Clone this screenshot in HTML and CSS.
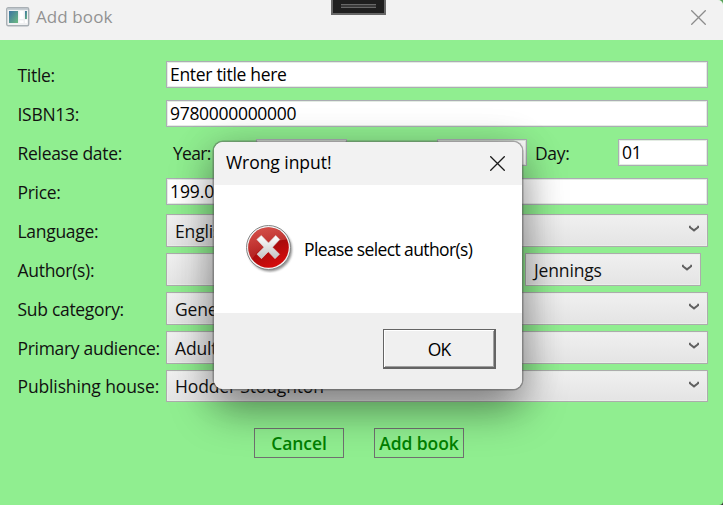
FILE: index.html
```html
<!DOCTYPE html>
<html lang="en">
<head>
<meta charset="utf-8">
<title>Add book</title>
<link rel="stylesheet" href="styles.css">
</head>
<body>
<svg class="defs" width="0" height="0"><symbol id="chev" viewBox="0 0 10 7"><path d="M.8 .8v1.400L5 5.400l4.200-3.200V.8" fill="none" stroke="#606060" stroke-width="2"/></symbol></svg>
<div class="window">
  <header class="titlebar">
    <svg class="appicon" width="24" height="20" viewBox="0 0 24 20">
      <defs><linearGradient id="scr" x1="0" y1="0" x2="1" y2="1"><stop offset="0" stop-color="#3c73a3"/><stop offset="1" stop-color="#6dbb80"/></linearGradient></defs>
      <rect x=".7" y=".7" width="22" height="18" rx="1.500" fill="#f0f1f2" stroke="#a9b0b5" stroke-width="1.400"/>
      <path d="M1.500 2h20.500" stroke="#b9c2c8" stroke-width="1.500"/>
      <rect x="3" y="4" width="9" height="12" fill="url(#scr)"/>
      <path d="M13.500 4h4v8h-4zM13.500 13.500h4v2.500h-4zM19 13h2v3h-2z" fill="#fff"/>
      <rect x="19" y="4" width="2" height="8" fill="url(#scr)"/>
    </svg>
    <span class="caption">Add book</span>
    <svg class="close" width="15" height="15" viewBox="0 0 15 15"><path d="M.3.3l14.400 14.400M14.700.3L.3 14.700" stroke="#8c8c8c" stroke-width="1.300"/></svg>
  </header>
  <main class="form">
    <div class="row"><label>Title:</label><div class="box">Enter title here</div></div>
    <div class="row"><label>ISBN13:</label><div class="box">9780000000000</div></div>
    <div class="row"><label>Release date:</label>
      <div class="dates"><span class="part year">Year:</span><div class="box"></div><span class="part">Month:</span><div class="box"></div><span class="part">Day:</span><div class="box">01</div></div>
    </div>
    <div class="row"><label>Price:</label><div class="box price">199.00</div></div>
    <div class="row"><label>Language:</label><div class="combo">English<svg class="chev"><use href="#chev"/></svg></div></div>
    <div class="row"><label>Author(s):</label>
      <div class="authors"><div class="combo"><svg class="chev"><use href="#chev"/></svg></div><div class="combo"><svg class="chev"><use href="#chev"/></svg></div><div class="combo">Jennings<svg class="chev"><use href="#chev"/></svg></div></div>
    </div>
    <div class="row"><label>Sub category:</label><div class="combo">General<svg class="chev"><use href="#chev"/></svg></div></div>
    <div class="row"><label>Primary audience:</label><div class="combo">Adult<svg class="chev"><use href="#chev"/></svg></div></div>
    <div class="row final"><label>Publishing house:</label><div class="combo">Hodder Stoughton<svg class="chev"><use href="#chev"/></svg></div></div>
    <div class="actions"><button>Cancel</button><button>Add book</button></div>
  </main>
  <div class="grip"><i></i></div>
</div>
<section class="dialog">
  <header class="dhead"><span>Wrong input!</span><svg width="15" height="15" viewBox="0 0 15 15"><path d="M.3.3l14.400 14.400M14.700.3L.3 14.700" stroke="#1a1a1a" stroke-width="1.300"/></svg></header>
  <div class="dbody">
    <svg class="error" width="48" height="48" viewBox="0 0 48 48">
      <defs>
        <linearGradient id="red" x1=".2" y1="0" x2=".7" y2="1"><stop offset="0" stop-color="#c8302c"/><stop offset=".5" stop-color="#a60c0d"/><stop offset="1" stop-color="#d90b0b"/></linearGradient>
        <linearGradient id="gloss" x1="0" y1="0" x2="0" y2="1"><stop offset="0" stop-color="#e06a62" stop-opacity=".55"/><stop offset="1" stop-color="#d65751" stop-opacity=".3"/></linearGradient>
        <linearGradient id="cross" x1="0" y1="0" x2="0" y2="1"><stop offset="0" stop-color="#fff"/><stop offset="1" stop-color="#c4c4c4"/></linearGradient>
        <filter id="soft"><feGaussianBlur stdDeviation="1"/></filter>
      </defs>
      <circle cx="24" cy="24.500" r="22" fill="#555" opacity=".65" filter="url(#soft)"/>
      <circle cx="22.500" cy="22.500" r="22" fill="#f4f4f4" stroke="#858585"/>
      <circle cx="22.500" cy="22.500" r="20.300" fill="url(#red)"/>
      <path d="M2.200 24A20.300 20.300 0 0 1 41 14.500C28 15 15 21 6 34Q2 29 2.200 24Z" fill="url(#gloss)"/>
      <path d="M10.800 14.500l4.500-4 7.200 7.500 7.200-7.500 4 4-7.200 7.700 7 7-4.500 4.500-6.700-7-6.800 7-4.500-4.500 7-7z" fill="url(#cross)" stroke="#ddd" stroke-width=".6" stroke-linejoin="round"/>
    </svg>
    <span>Please select author(s)</span>
  </div>
  <footer class="dfoot"><button class="ok">OK</button></footer>
</section>
</body>
</html>
```
FILE: styles.css
```css
* { box-sizing: border-box; }
body { margin: 0; width: 723px; height: 505px; overflow: hidden; background: linear-gradient(#5aa05a 50%, #333 50%); font: 17.5px/24px "Open Sans", sans-serif; letter-spacing: -.34px; color: #111; }
.defs { position: absolute; }
.window { position: relative; width: 723px; height: 505px; background: #90ee90; border-radius: 0 5px 4px 0; overflow: hidden; }
.titlebar { display: flex; align-items: center; height: 40px; padding: 0 17px 5px 6px; background: #f2f2f2; color: #929292; }
.appicon { margin-bottom: 2px; }
.caption { margin: 0 0 2px 6px; letter-spacing: .1px; font-size: 17px; }
.close { margin-left: auto; }
.grip { position: absolute; left: 331px; top: 0; width: 55px; height: 15px; background: #1f1f1f; border: 2px solid #666; border-top: 0; padding: 4px 8px; }
.grip i { display: block; height: 4px; border: solid #686868; border-width: 1px 0; background: #3a3a3a; }
.form { padding: 15px 15px 0 17.500px; }
.row { display: grid; grid-template-columns: 148.500px 542px; align-items: center; height: 39px; }
.row label { white-space: nowrap; letter-spacing: -.3px; }
.box { height: 27px; padding: 0 3px; background: #fff; border: 1px solid #abadb3; box-shadow: inset 0 0 0 1px #e3ece3; color: #000; line-height: 25px; letter-spacing: -.3px; }
.price { letter-spacing: -.1px; }
.dates { display: grid; grid-template-columns: 90px 91px 90px 90px 91px 90px; align-items: center; }
.part { padding: 0 0 0 8px; }
.year { padding-left: 7px; letter-spacing: -.7px; }
.combo { display: flex; justify-content: space-between; height: 33px; padding: 1px 8px 0; background: linear-gradient(#f0f0f0, #e4e4e4); border: 1px solid #acacac; box-shadow: inset 0 0 0 1px #e9eee9; line-height: 31px; letter-spacing: -.15px; }
.final { height: 37px; }
.final label { letter-spacing: -.13px; }
.final .combo { height: 32px; line-height: 29px; }
.chev { width: 10px; height: 7px; margin: 9px 0 0 auto; }
.authors { display: grid; grid-template-columns: 175px 174px 176px; gap: 5px; }
.actions { display: flex; gap: 30px; padding: 24px 0 0 236.500px; }
button { font: inherit; letter-spacing: inherit; padding: 0; margin: 0; }
.actions button { width: 90px; height: 30px; border: 1px solid #707070; background: none; color: #008000; font-weight: 600; white-space: nowrap; letter-spacing: -.1px; }
.dialog { position: absolute; left: 214px; top: 142px; width: 308px; height: 247px; border-radius: 9px; background: #fff; box-shadow: 0 0 0 1.500px rgba(80, 80, 80, .45), 0 20px 44px rgba(0, 0, 0, .4), 0 4px 40px rgba(0, 0, 0, .16); display: flex; flex-direction: column; }
.dhead { display: flex; justify-content: space-between; align-items: center; height: 43px; padding: 0 17px 1px 12px; background: #f2f2f2; border-radius: 9px 9px 0 0; color: #000; letter-spacing: -.05px; }
.dhead span { margin-bottom: 2px; }
.dbody { display: flex; align-items: center; flex: 1; padding-left: 32px; }
.dbody span { margin: 0 0 1px 10px; letter-spacing: -.62px; color: #000; }
.dfoot { height: 76px; background: #efefef; border-radius: 0 0 9px 9px; padding: 16px 26px 0 0; text-align: right; }
.ok { width: 113px; height: 40px; background: #f0f0f0; border: solid #646464; border-width: 1px 2px 2px 1px; box-shadow: inset 1px 1px #fff, inset -1px -1px #a0a0a0; color: #000; letter-spacing: -.8px; }
```
